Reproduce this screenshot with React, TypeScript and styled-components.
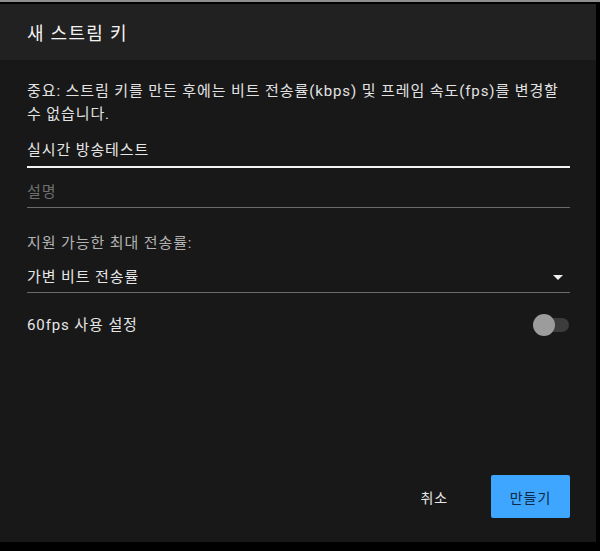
import React from 'react';
import styled, { createGlobalStyle } from 'styled-components';

const GlobalStyle = createGlobalStyle`
  html, body {
    margin: 0;
    padding: 0;
    background: #000000;
    font-family: Roboto, 'Noto Sans CJK KR', 'Noto Sans', sans-serif;
  }
`;

// ===== STYLED COMPONENTS =====

const Page = styled.div`
  width: 600px;
  height: 551px;
  box-sizing: border-box;
  border-top: 2px solid #8e8e8e;
  padding-top: 2px;
  background: #000000;
  overflow: hidden;
`;

const Dialog = styled.div`
  width: 596px;
  height: 538px;
  display: flex;
  flex-direction: column;
  background: #181818;
  color: #e6e6e6;
  letter-spacing: 0.9px;
`;

const Header = styled.div`
  height: 56px;
  flex-shrink: 0;
  display: flex;
  align-items: center;
  padding: 0 27px;
  background: #212121;
`;

const Title = styled.h2`
  margin: 0;
  font-size: 18px;
  font-weight: 400;
  color: #f2f2f2;
  letter-spacing: 1.3px;
`;

const Body = styled.div`
  flex: 1;
  display: flex;
  flex-direction: column;
  padding: 20px 26px 0 27px;
`;

const Notice = styled.p`
  margin: 0;
  font-size: 15px;
  line-height: 23px;
  color: #e2e2e2;
`;

const Field = styled.div<{ $focused?: boolean; $top: number }>`
  display: flex;
  align-items: center;
  justify-content: space-between;
  margin-top: ${p => p.$top}px;
  padding-bottom: ${p => (p.$focused ? 5 : 4)}px;
  border-bottom: ${p => (p.$focused ? '2px solid #f5f5f5' : '1px solid #6a6a6a')};
`;

const FieldText = styled.span<{ $muted?: boolean }>`
  font-size: 15px;
  line-height: 22px;
  color: ${p => (p.$muted ? '#6f6f6f' : '#e6e6e6')};
`;

const Label = styled.div`
  margin-top: 24px;
  font-size: 15px;
  line-height: 22px;
  color: #b3b3b3;
`;

const ToggleRow = styled.div`
  display: flex;
  align-items: center;
  justify-content: space-between;
  margin-top: 21px;
`;

const Toggle = styled.div`
  position: relative;
  width: 36px;
  height: 22px;
  margin-right: 1px;
`;

const Track = styled.div`
  position: absolute;
  left: 6px;
  right: 0;
  top: 4px;
  height: 14px;
  border-radius: 7px;
  background: #3c3c3c;
`;

const Knob = styled.div`
  position: absolute;
  left: 0;
  top: 0;
  width: 22px;
  height: 22px;
  border-radius: 50%;
  background: #9c9c9c;
`;

const Footer = styled.div`
  display: flex;
  justify-content: flex-end;
  align-items: center;
  gap: 43px;
  margin-top: auto;
  padding-bottom: 24px;
`;

const TextButton = styled.button`
  border: none;
  background: none;
  padding: 0;
  font-family: inherit;
  font-size: 14px;
  letter-spacing: 0.9px;
  color: #e6e6e6;
`;

const PrimaryButton = styled.button`
  width: 79px;
  height: 43px;
  border: none;
  border-radius: 2px;
  background: #3ea6ff;
  color: #0d2a44;
  font-family: inherit;
  font-size: 14px;
  letter-spacing: 0.9px;
`;

const Caret = () => (
  <svg width="10" height="5" viewBox="0 0 10 5" style={{ marginRight: 7 }}>
    <path d="M0 0 L10 0 L5 5 Z" fill="#f0f0f0" />
  </svg>
);

// ===== MAIN COMPONENT =====

export default function App() {
  return (
    <>
      <GlobalStyle />
      <Page>
        <Dialog>
          <Header>
            <Title>새 스트림 키</Title>
          </Header>
          <Body>
            <Notice>
              중요: 스트림 키를 만든 후에는 비트 전송률(kbps) 및 프레임 속도(fps)를 변경할 수 없습니다.
            </Notice>
            <Field $focused $top={13}>
              <FieldText>실시간 방송테스트</FieldText>
            </Field>
            <Field $top={13}>
              <FieldText $muted>설명</FieldText>
            </Field>
            <Label>지원 가능한 최대 전송률:</Label>
            <Field $top={12}>
              <FieldText>가변 비트 전송률</FieldText>
              <Caret />
            </Field>
            <ToggleRow>
              <FieldText>60fps 사용 설정</FieldText>
              <Toggle>
                <Track />
                <Knob />
              </Toggle>
            </ToggleRow>
            <Footer>
              <TextButton>취소</TextButton>
              <PrimaryButton>만들기</PrimaryButton>
            </Footer>
          </Body>
        </Dialog>
      </Page>
    </>
  );
}
